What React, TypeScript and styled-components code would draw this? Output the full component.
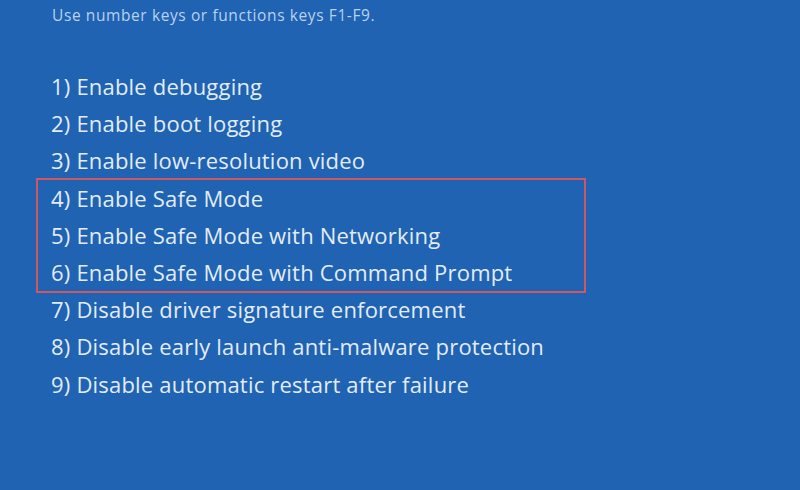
import React from "react";
import styled, { createGlobalStyle } from "styled-components";

const Global = createGlobalStyle`
  html, body { margin: 0; padding: 0; background: #1f63b2; }
  #root { width: 800px; height: 490px; }
`;

const Screen = styled.div`
  width: 800px;
  height: 490px;
  background: #1f63b2;
  box-sizing: border-box;
  padding: 5px 0 0 36px;
  font-family: "Open Sans", "Noto Sans", sans-serif;
  overflow: hidden;
`;

const Hint = styled.div`
  font-size: 15.5px;
  letter-spacing: 0.6px;
  color: #b9d1ee;
  margin-left: 16px;
  height: 20px;
  line-height: 20px;
`;

const List = styled.div`
  display: flex;
  flex-direction: column;
  margin-top: 42px;
`;

const Group = styled.div<{ $highlight?: boolean }>`
  display: flex;
  flex-direction: column;
  width: 550px;
  box-sizing: border-box;
  border: 2.5px solid ${(p) => (p.$highlight ? "#cc5862" : "transparent")};
  margin: -1px 0 -3px;
`;

const Item = styled.div`
  font-size: 22px;
  letter-spacing: 0.2px;
  color: #e3ecf7;
  height: 37.2px;
  line-height: 37.2px;
  padding-left: 13px;
  white-space: nowrap;
`;

const before = [
  "1) Enable debugging",
  "2) Enable boot logging",
  "3) Enable low-resolution video",
];
const safe = [
  "4) Enable Safe Mode",
  "5) Enable Safe Mode with Networking",
  "6) Enable Safe Mode with Command Prompt",
];
const after = [
  "7) Disable driver signature enforcement",
  "8) Disable early launch anti-malware protection",
  "9) Disable automatic restart after failure",
];

export default function App() {
  return (
    <>
      <Global />
      <Screen>
        <Hint>Use number keys or functions keys F1-F9.</Hint>
        <List>
          <Group>
            {before.map((t) => (
              <Item key={t}>{t}</Item>
            ))}
          </Group>
          <Group $highlight>
            {safe.map((t) => (
              <Item key={t}>{t}</Item>
            ))}
          </Group>
          <Group>
            {after.map((t) => (
              <Item key={t}>{t}</Item>
            ))}
          </Group>
        </List>
      </Screen>
    </>
  );
}
